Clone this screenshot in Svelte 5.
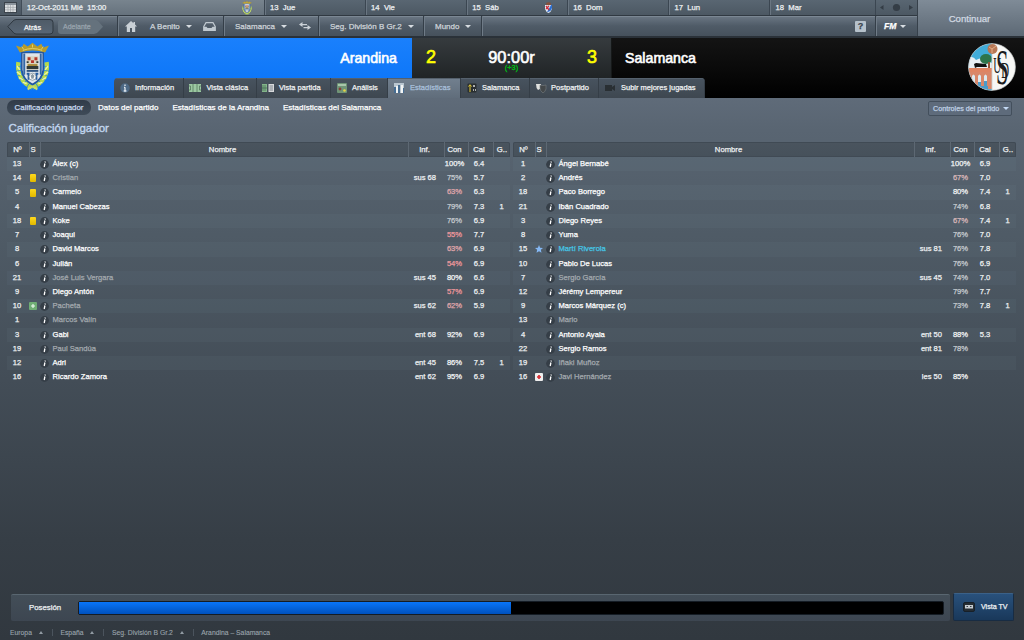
<script>
  // number, status, name, kind, info, condition, rating, goals
  const home = [
    [13, '', 'Álex (c)', '', '', 100, '6.4', ''],
    [14, 'yellow', 'Cristian', 'off', 'sus 68', 75, '5.7', ''],
    [5, 'yellow', 'Carmelo', '', '', 63, '6.3', ''],
    [4, '', 'Manuel Cabezas', '', '', 79, '7.3', 1],
    [18, 'yellow', 'Koke', '', '', 76, '6.9', ''],
    [7, '', 'Joaqui', '', '', 55, '7.7', ''],
    [8, '', 'David Marcos', '', '', 63, '6.9', ''],
    [6, '', 'Julián', '', '', 54, '6.9', ''],
    [21, '', 'José Luis Vergara', 'off', 'sus 45', 80, '6.6', ''],
    [9, '', 'Diego Antón', '', '', 57, '6.9', ''],
    [10, 'plus', 'Pacheta', 'off', 'sus 62', 62, '5.9', ''],
    [1, '', 'Marcos Valín', 'off', '', '', '', ''],
    [3, '', 'Gabi', '', 'ent 68', 92, '6.9', ''],
    [19, '', 'Paul Sandúa', 'off', '', '', '', ''],
    [12, '', 'Adri', '', 'ent 45', 86, '7.5', 1],
    [16, '', 'Ricardo Zamora', '', 'ent 62', 95, '6.9', '']
  ];

  const away = [
    [1, '', 'Ángel Bernabé', '', '', 100, '6.9', ''],
    [2, '', 'Andrés', '', '', 67, '7.0', ''],
    [18, '', 'Paco Borrego', '', '', 80, '7.4', 1],
    [21, '', 'Ibán Cuadrado', '', '', 74, '6.8', ''],
    [3, '', 'Diego Reyes', '', '', 67, '7.4', 1],
    [8, '', 'Yuma', '', '', 76, '7.0', ''],
    [15, 'star', 'Martí Riverola', 'best', 'sus 81', 76, '7.8', ''],
    [10, '', 'Pablo De Lucas', '', '', 76, '6.9', ''],
    [7, '', 'Sergio García', 'off', 'sus 45', 74, '7.0', ''],
    [12, '', 'Jérémy Lempereur', '', '', 79, '7.7', ''],
    [9, '', 'Marcos Márquez (c)', '', '', 73, '7.8', 1],
    [13, '', 'Mario', 'off', '', '', '', ''],
    [4, '', 'Antonio Ayala', '', 'ent 50', 88, '5.3', ''],
    [22, '', 'Sergio Ramos', '', 'ent 81', 78, '', ''],
    [19, '', 'Iñaki Muñoz', 'off', '', '', '', ''],
    [16, 'injury', 'Javi Hernández', 'off', 'les 50', 85, '', '']
  ];

  const days = ['13  Jue', '14  Vie', '15  Sáb', '16  Dom', '17  Lun', '18  Mar'];
  const tabs = [
    { name: 'Información', icon: 'info', w: 70 },
    { name: 'Vista clásica', icon: 'pitch', w: 73 },
    { name: 'Vista partida', icon: 'split', w: 74 },
    { name: 'Análisis', icon: 'analysis', w: 57 },
    { name: 'Estadísticas', icon: 'stats', w: 73 },
    { name: 'Salamanca', icon: 'tactics', w: 69 },
    { name: 'Postpartido', icon: 'masks', w: 69 },
    { name: 'Subir mejores jugadas', icon: 'camera', w: 106 }
  ];
  const pads = [21, 22.5, 22, 21, 22, 21, 21, 22];

  let active = $state('Estadísticas');
  let possession = 50;

  function conClass(c) {
    if (c === 100) return 'full';
    if (c >= 80) return 'high';
    if (c < 60) return 'bad';
    if (c < 65) return 'low';
    if (c < 70) return 'mid';
    return '';
  }
</script>

{#snippet crest(w, h)}
  <svg width={w} height={h} viewBox="0 0 36 50">
    <g fill="none" stroke="#b5d84c" stroke-width="4.4" stroke-dasharray="4 .6">
      <path d="M3.500 20Q1 38 18 46.500" />
      <path d="M32.500 20Q35 38 18 46.500" />
    </g>
    <path d="M2 24l3 4M2 30l4 3M4 36l4 2M8 41l4 1M34 24l-3 4M34 30l-4 3M32 36l-4 2M28 41l-4 1" stroke="#eff59c" stroke-width="1.500" />
    <path d="M13 48l5-3 5 3" stroke="#c9dd68" stroke-width="2" fill="none" />
    <path d="M7 10H29V28Q28 38 18 43Q8 38 7 28Z" fill="#dfe5ea" stroke="#26579b" stroke-width="1.6" />
    <path d="M9.5 11V33M26.5 11V33" stroke="#3268a8" stroke-width="2" />
    <path d="M12 14h12v14H12z" fill="#d9d3bd" />
    <path d="M13 15h3v3h-3zM20 15h3v3h-3zM16.5 18h3v3h-3z" fill="#b5362a" />
    <path d="M12 19h2v2h-2zM22 19h2v2h-2zM12 24h12v3H12z" fill="#313a36" />
    <path d="M13 22h10v2H13z" fill="#a88b3b" />
    <path d="M12 28h12v2H12z" fill="#315784" />
    <path d="M12 32h2v6M24 32h-2v6" stroke="#255da1" stroke-width="2" fill="none" />
    <circle cx="18" cy="35" r="3.6" fill="#fff" stroke="#7b8d9a" stroke-width=".8" />
    <path d="M16 34l2-2 2 2-1 3h-2z" fill="#8c9ba4" />
    <path d="M5 10L1 3l6 2 2-4 4 3 5-4 5 4 4-3 2 4 6-2-4 7Q18 6 5 10Z" fill="#b79b2c" />
    <path d="M8 8Q18 4 28 8M7 4l2 3M18 2v3M29 4l-2 3" stroke="#e4cf62" fill="none" />
  </svg>
{/snippet}

{#snippet table(rows)}
  <section class="table">
    <div class="row thead">
      <b>Nº</b><b>S</b><b>Nombre</b><b>Inf.</b><b>Con</b><b>Cal</b><b>G..</b>
    </div>
    {#each rows as [num, status, name, kind, info, con, cal, goals]}
      <div class="row">
        <span class="num">{num}</span>
        <span class="status">
          {#if status === 'yellow'}
            <i class="card"></i>
          {:else if status === 'plus'}
            <svg width="8" height="8" viewBox="0 0 8 8"><rect width="8" height="8" rx="1" fill="#6fae74" /><path d="M4 2v4M2 4h4" stroke="#eefaf0" stroke-width="1.1" /></svg>
          {:else if status === 'injury'}
            <svg width="8" height="8" viewBox="0 0 8 8"><rect width="8" height="8" rx="1" fill="#eee" /><path d="M4 2v4M2 4h4" stroke="#d62d34" stroke-width="1.7" /></svg>
          {:else if status === 'star'}
            <svg width="8" height="8" viewBox="0 0 10 10"><path d="M5 0l1.4 3.3 3.6.3-2.7 2.4.8 3.7L5 7.7 1.9 9.7l.8-3.7L0 3.6l3.6-.3z" fill="#85b8f4" /></svg>
          {/if}
        </span>
        <span class="name {kind}">
          <svg class="i" width="9" height="9" viewBox="0 0 9 9"><circle cx="4.5" cy="4.5" r="4.4" fill="#353e47" /><path d="M4.9 3.5L4.2 7M5.300 1.500L5.100 2.500" stroke="#fff" stroke-width="1.3" /></svg>
          {name}
        </span>
        <span class="info">{info}</span>
        <span class="con {conClass(con)}">{con ? con + '%' : ''}</span>
        <span class="rating">{cal}</span>
        <span class="goals">{goals}</span>
      </div>
    {/each}
  </section>
{/snippet}

<div class="app">
  <div class="top">
    <div class="bars">
      <div class="dates">
        <div class="cal">
          <svg width="13" height="11" viewBox="0 0 13 11"><rect x=".5" y=".5" width="12" height="10" fill="#dde0e2" stroke="#3c444c" /><path d="M1 1h11v2H1z" fill="#8b949c" /><path d="M1 5.4h11M1 7.8h11M4 3v7M6.5 3v7M9 3v7" stroke="#a4a9ae" stroke-width=".7" /></svg>
        </div>
        <div class="today"><span>12-Oct-2011 Mié&nbsp; 15:00</span>{@render crest(10, 14)}</div>
        {#each days as day, i}
          <div class="day">
            <span>{day}</span>
            {#if i === 2}
              <svg width="9" height="11" viewBox="0 0 9 11"><path d="M1 3h7v4Q7 10 4.5 11 2 10 1 7z" fill="#e8edf7" /><path d="M7 3L3 10Q7 10 8 6V3z" fill="#2e6fd0" /><path d="M2 4l3 4M5 4L2 7" stroke="#d02f3c" stroke-width="1.3" /><ellipse cx="4.5" cy="1.8" rx="2.5" ry="1.5" fill="#87503c" /></svg>
            {/if}
          </div>
        {/each}
        <div class="pager">
          <svg width="36" height="9" viewBox="0 0 36 9" fill="#343d46"><path d="M4.500 2v5L1 4.500z" /><circle cx="17.500" cy="4.500" r="3.600" /><path d="M30 2v5l4-2.500z" /></svg>
        </div>
      </div>
      <div class="menu">
        <div class="nav">
          <svg class="arrows" width="103" height="17" viewBox="0 0 103 17">
            <defs><linearGradient id="btn" x2="0" y2="1"><stop stop-color="#4f5b67" /><stop offset="1" stop-color="#586675" /></linearGradient></defs>
            <path d="M9 1.500H43Q46 1.500 46 4.500V13Q46 16 43 16H9Q7 16 5 13L.8 8.700 5 4Q7 1.500 9 1.500Z" fill="url(#btn)" stroke="#2f3841" />
            <path d="M54 1.500H87Q90 1.500 92 4L96 8.700 92 13Q90 16 87 16H54Q51 16 51 13V4.500Q51 1.500 54 1.500Z" fill="#65727d" />
          </svg>
          <span class="back">Atrás</span>
          <span class="fwd">Adelante</span>
        </div>
        <div class="seg manager">
          <svg width="12" height="11" viewBox="0 0 12 11" fill="#c9d0d6"><path d="M6 0L0 5.500h1.800V11H5V7h2v4h3.200V5.500H12L10 3.600V1H8.500v1.300z" /></svg>
          <span>A Benito</span><i class="down"></i>
          <svg width="13" height="9" viewBox="0 0 13 9"><path d="M3 .6h7l2.300 4v3.800H.7V4.600z" fill="none" stroke="#bfc8cf" stroke-width="1.200" /><path d="M1 4.800h2.500l1 1.300h4l1-1.300h2.500v3.300H1z" fill="#bfc8cf" /></svg>
        </div>
        <div class="seg club"><span>Salamanca</span><i class="down"></i>
          <svg width="12" height="8" viewBox="0 0 12 8"><path d="M3.500 0L0 2.500 3.500 5V3.200H8V1.900H3.500zM8.500 3L12 5.500 8.500 8V6.200H4.500V4.900h4z" fill="#cbd1d7" /></svg>
        </div>
        <div class="seg league"><span>Seg. División B Gr.2</span><i class="down"></i></div>
        <div class="seg world"><span>Mundo</span><i class="down"></i></div>
        <div class="seg help"><span>?</span></div>
        <div class="seg fm"><b>FM</b><i class="down"></i></div>
      </div>
    </div>
    <div class="continue">Continuar</div>
  </div>

  <header>
    <div class="scoreline">
      <div class="home"><span>Arandina</span></div>
      <div class="score">
        <b>2</b>
        <div class="clock"><span>90:00r</span><small>(+3)</small></div>
        <b>3</b>
      </div>
      <div class="away"><span>Salamanca</span></div>
    </div>
    <div class="homecrest">{@render crest(35, 50)}</div>
    <div class="awaycrest">
      <svg width="48" height="48" viewBox="0 0 48 48">
        <defs><clipPath id="disc"><circle cx="24" cy="24" r="23.500" /></clipPath></defs>
        <g clip-path="url(#disc)">
          <path d="M0 0h48v48H0z" fill="#f7f7f5" />
          <path d="M0 0h24v48H0z" fill="#41acd9" />
          <path d="M0 14q5-1 8 3 7-4 10 1 3 0 6 2v6H0z" fill="#e8eff4" />
          <path d="M0 25h24v5H0z" fill="#df8462" />
          <path d="M0 29h24v17H0z" fill="#d98769" />
          <path d="M4 33q1.500-3 3 0v10H4zM10 33q1.500-3 3 0v14h-3zM16 33q1.500-3 3 0v16h-3z" fill="#dce9ef" />
          <path d="M0 39h7v4H0zM10 39h3v6h-3zM16 38h3v9h-3zM8 43h12v5H8z" fill="#4b9bca" />
          <path d="M6 21l2-1 10 1 1 3H9l-2 1z" fill="#111" />
          <ellipse cx="18" cy="16" rx="6" ry="5" fill="#2d744b" />
          <path d="M20 19h2v6h-2z" fill="#93573a" />
          <path d="M24 0v48" stroke="#c6d0d2" stroke-width=".8" />
        </g>
        <circle cx="24.500" cy="6" r="5" fill="#b77754" />
        <path d="M21 4l3 2 4-3M24 6v4" stroke="#e3ac85" fill="none" />
        <text class="mono" transform="scale(.45 1)" x="56 62 74" y="30 41 35" font-size="24">U<tspan font-size="50">S</tspan>D</text>
        <circle cx="24" cy="24" r="23.400" fill="none" stroke="#b9bcbc" stroke-width=".6" />
      </svg>
    </div>
    <nav class="tabs">
      {#each tabs as tab, i}
        <button class:active={active === tab.name} style="width: {tab.w}px; padding-left: {pads[i]}px" onclick={() => (active = tab.name)}>
          <svg width="12" height="10" viewBox="0 0 12 10">
            {#if tab.icon === 'info'}
              <circle cx="6" cy="5" r="4.700" fill="#4d6985" /><path d="M6 4.200V8M5 4.300h1M4.700 8h2.700M6 1.500v1.400" stroke="#e5ecf2" stroke-width="1.300" />
            {:else if tab.icon === 'pitch'}
              <path d="M0 1h12v8H0z" fill="#9cc8a2" /><path d="M4 1v8M8 1v8M0 3h1.500v4H0M12 3h-1.500v4H12" stroke="#55795d" stroke-width=".8" fill="none" />
            {:else if tab.icon === 'split'}
              <path d="M0 1h5v8H0z" fill="#83b48a" /><path d="M1 2v6M3 2v6M0 5h5" stroke="#426650" stroke-width=".7" /><path d="M6.500 1H12v8H6.500z" fill="#d7d9db" /><path d="M7.500 3h3.500M7.500 5h3.500M7.500 7h3.500" stroke="#68727c" stroke-width=".8" />
            {:else if tab.icon === 'analysis'}
              <rect x="1" width="10" height="10" rx="1" fill="#709477" /><path d="M2 1h8v2H2z" fill="#a9c5aa" /><circle cx="4" cy="6" r="1.400" fill="#863e38" /><circle cx="8.500" cy="7.500" r="1.300" fill="#e6d445" />
            {:else if tab.icon === 'stats'}
              <path d="M1 0h10v10H1z" fill="#b9c6d0" /><path d="M1 4h3v6H1zM5 2h2v8H5zM8 5h3v5H8z" fill="#456c91" /><path d="M3 3h2v7H3zM8 2h2v8H8z" fill="#f2f4f4" />
            {:else if tab.icon === 'tactics'}
              <rect x="1.500" y=".5" width="9" height="9" rx="1" fill="#292e30" /><path d="M4 9V2M2.500 3.500L4 1.700l1.500 1.800" stroke="#e5cb37" fill="none" /><path d="M7 3h2M7 7h1M9 7h1" stroke="#dcdcda" stroke-width="1.300" />
            {:else if tab.icon === 'masks'}
              <path d="M1 1h5v3Q5 7 3 7 1 5 1 1z" fill="#e0e1df" /><path d="M5 2q3 1 6 0v4Q10 9 8 10 5 8 5 5z" fill="#44484a" stroke="#777e81" stroke-width=".6" />
            {:else}
              <path d="M1 2h7v6H1zM8 4l3-2v6L8 6z" fill="#292f33" />
            {/if}
          </svg>
          <span>{tab.name}</span>
        </button>
      {/each}
    </nav>
  </header>

  <div class="subnav">
    <span class="pill">Calificación jugador</span>
    <span>Datos del partido</span>
    <span>Estadísticas de la Arandina</span>
    <span>Estadísticas del Salamanca</span>
    <div class="controls">Controles del partido<i class="down"></i></div>
  </div>

  <h1>Calificación jugador</h1>

  <main>
    {@render table(home)}
    {@render table(away)}
  </main>

  <div class="bottom">
    <div class="possession">
      <span>Posesión</span>
      <div class="bar"><div style="width: {possession}%"></div></div>
    </div>
    <div class="tv">
      <svg width="12" height="10" viewBox="0 0 12 10"><rect x=".5" y=".5" width="11" height="9" rx="1.500" fill="#252c32" stroke="#172029" /><path d="M2 3h8v3.500H2z" fill="#c5cbd0" /><path d="M3.500 4h1.500v1H3.500zM7 4h1.500v1H7z" fill="#39424a" /></svg>
      <span>Vista TV</span>
    </div>
  </div>
  <footer>
    <span>Europa</span><i class="up"></i>
    <span class="sep">España</span><i class="up"></i>
    <span class="sep">Seg. División B Gr.2</span><i class="up"></i>
    <span class="sep">Arandina – Salamanca</span>
  </footer>
</div>

<style>
  :global(body) {
    margin: 0;
  }
  * {
    box-sizing: border-box;
  }
  svg {
    flex: none;
    display: block;
  }
  .app {
    width: 1024px;
    height: 640px;
    overflow: hidden;
    display: flex;
    flex-direction: column;
    font: 7.6px 'Liberation Sans', Arial, sans-serif;
    color: #edf0f2;
    white-space: nowrap;
    -webkit-text-stroke: 0.25px currentColor;
    background: linear-gradient(#5f6b79 98px, #596572 130px, #4f5b66 235px, #434d57 380px, #363e46 540px, #31383f 640px);
  }
  .down, .up {
    flex: none;
    width: 0;
    height: 0;
    border: 3px solid transparent;
    border-bottom-width: 0;
    border-top: 3px solid #d8dde2;
  }
  .up {
    border: 2.5px solid transparent;
    border-top-width: 0;
    border-bottom: 3px solid #929ba3;
  }

  .top {
    height: 38px;
    display: flex;
    border-bottom: 2px solid #2a3138;
  }
  .bars {
    width: 917px;
  }
  .dates {
    height: 16px;
    display: flex;
    background: linear-gradient(#596672, #4c5863);
    border-bottom: 1px solid #303942;
  }
  .cal {
    width: 22px;
    padding: 2px 0 0 4px;
    border-right: 1px solid #414c57;
  }
  .today {
    width: 242px;
    padding: 0 12px 0 5px;
    display: flex;
    align-items: center;
    justify-content: space-between;
    background: linear-gradient(#78848e, #66727d);
    font-size: 7.6px;
  }
  .day {
    width: 101.1px;
    padding: 0 14px 0 5px;
    border-left: 1px solid #3b4651;
    box-shadow: inset 1px 0 #6a7682;
    display: flex;
    align-items: center;
    justify-content: space-between;
    white-space: pre;
    font-size: 7.7px;
  }
  .pager {
    flex: 1;
    margin-left: 4px;
    padding: 3px 0 0 3px;
    border-left: 1px solid #3b4651;
  }
  .menu {
    height: 20px;
    display: flex;
    background: linear-gradient(#6b7784, #4f5b67 50%, #46515c);
    box-shadow: inset 0 1px #7b8793;
    color: #ced4d9;
    font-size: 8px;
  }
  .nav {
    width: 117px;
    position: relative;
  }
  .arrows {
    margin: 2px 0 0 7px;
  }
  .back, .fwd {
    position: absolute;
    top: 7px;
    left: 24px;
    font-size: 7.3px;
    color: #f4f5f6;
  }
  .fwd {
    left: 63px;
    font-size: 7px;
    color: #99a4ad;
  }
  .seg {
    display: flex;
    align-items: center;
    border-left: 1px solid #343e48;
    box-shadow: inset 1px 0 #6f7b87;
    padding-left: 11px;
  }
  .seg .down {
    margin: 1px 0 0 6px;
  }
  .manager { width: 106px; padding-left: 7px; }
  .manager span { margin-left: 13px; }
  .manager svg:last-child { margin-left: 11px; }
  .club { width: 95px; }
  .club svg { margin-left: 12px; }
  .league { width: 105px; }
  .world { width: 58px; }
  .help {
    flex: 1;
    justify-content: flex-end;
    padding-right: 9px;
  }
  .help span {
    width: 11px;
    height: 11px;
    background: #b5c1cb;
    border-radius: 1px;
    color: #39444e;
    font: bold 9px/11px 'Liberation Sans', Arial, sans-serif;
    text-align: center;
  }
  .fm { width: 42px; padding-left: 8px; }
  .fm b {
    font-style: italic;
    font-size: 8.6px;
    color: #fff;
  }
  .fm .down { margin-left: 4px; }
  .continue {
    flex: 1;
    border-left: 1px solid #36404a;
    background: linear-gradient(#7f8b97, #5d6975);
    font-size: 9.6px;
    line-height: 37px;
    text-align: center;
    color: #d1d9e2;
    padding-right: 3px;
  }

  header {
    height: 60px;
    position: relative;
    display: flex;
    flex-direction: column;
    border-bottom: 1px solid #414a54;
  }
  .scoreline {
    height: 60px;
    flex: none;
    display: flex;
    font-size: 14.2px;
    line-height: 40px;
    color: #fff;
    -webkit-text-stroke-width: 0.6px;
  }
  .home {
    width: 412px;
    padding-right: 15px;
    text-align: right;
    background: linear-gradient(#1a80fc, #0873f8);
  }
  .score {
    width: 200px;
    height: 40px;
    padding: 0 14px;
    display: flex;
    justify-content: space-between;
    background: linear-gradient(#363b3e, #202426);
    border-right: 1px solid #161919;
  }
  .score b {
    color: #ff0;
    font-size: 18px;
    font-weight: normal;
    line-height: 38px;
  }
  .clock {
    display: flex;
    flex-direction: column;
    align-items: center;
    font-size: 16.4px;
    line-height: 38px;
  }
  .clock small {
    color: #00b714;
    font-size: 7.4px;
    line-height: 8px;
    margin-top: -12px;
    -webkit-text-stroke-width: 0.35px;
  }
  .away {
    flex: 1;
    padding-left: 13px;
    background: linear-gradient(#141414, #000);
  }
  .homecrest, .awaycrest {
    position: absolute;
    left: 15px;
    top: 4px;
  }
  .awaycrest {
    left: 968px;
    top: 5px;
  }
  .mono {
    font-family: 'Liberation Serif', serif;
    fill: #1b1c20;
    stroke: none;
    -webkit-text-stroke: 0;
  }
  .tabs {
    height: 20px;
    display: flex;
    position: absolute;
    left: 114px;
    top: 40px;
    overflow: hidden;
    border-radius: 4px 4px 0 0;
    background: linear-gradient(#48535f, #3e4750);
  }
  .tabs button {
    position: relative;
    flex: none;
    height: 20px;
    border: 0;
    border-right: 1px solid #353e47;
    box-shadow: inset 0 1px #55616d;
    background: none;
    font: inherit;
    -webkit-text-stroke: inherit;
    font-size: 7.5px;
    line-height: 20px;
    color: #eef0f1;
    text-align: left;
    padding: 0;
  }
  .tabs svg {
    position: absolute;
    left: 5px;
    top: 5px;
  }
  .tabs .active {
    background: linear-gradient(#72808f, #606d7b);
    color: #a9c0dc;
  }

  .subnav {
    height: 20px;
    padding: 2px 12px 0 7px;
    display: flex;
    align-items: flex-start;
    font-size: 8px;
    line-height: 15px;
    color: #fff;
  }
  .subnav > span {
    margin-right: 14px;
  }
  .subnav .pill {
    width: 84px;
    margin-right: 7px;
    border-radius: 7px;
    background: linear-gradient(#303b49, #3f4b58);
    text-align: center;
    color: #c7d8ee;
    font-size: 7.9px;
  }
  .controls {
    width: 84px;
    height: 15px;
    margin: 1px 0 0 auto;
    padding-left: 4px;
    display: flex;
    align-items: center;
    background: #5e6b7b;
    border: 1px solid #434f5c;
    border-radius: 2px;
    color: #bfd0e4;
    font-size: 7.2px;
  }
  .controls .down {
    margin-left: 4px;
    border-top-color: #c4daf5;
  }
  h1 {
    height: 22px;
    margin: 0;
    padding-left: 8.5px;
    font-size: 11.5px;
    line-height: 20px;
    font-weight: normal;
    color: #c2d7f0;
    -webkit-text-stroke-width: 0.35px;
  }

  main {
    display: flex;
    gap: 3px;
    padding: 2px 7px 0;
  }
  .table {
    width: 503px;
  }
  .row {
    height: 14.23px;
    display: grid;
    grid-template-columns: 22px 11px 368px 36px 24px 25px 17px;
    line-height: 14.23px;
    text-align: center;
  }
  .row:nth-child(even) {
    background: rgba(130, 150, 165, 0.07);
  }
  .thead {
    height: 15px;
    line-height: 15px;
    font-size: 7.7px;
    background: linear-gradient(#4a545e, #46515b);
    border-radius: 2px 2px 0 0;
    box-shadow: inset 0 0 0 1px #404a54;
  }
  .thead b {
    font-weight: normal;
    padding-right: 4px;
    border-left: 1px solid #5d6873;
  }
  .thead b:first-child {
    border: 0;
    padding-right: 1px;
  }
  .thead b:last-child {
    padding: 0;
  }
  .num {
    padding-right: 2px;
  }
  .status {
    display: flex;
    align-items: center;
    justify-content: center;
    padding-right: 3px;
  }
  .card {
    width: 6px;
    height: 8px;
    background: linear-gradient(#ffd91c, #e2b900);
    border-radius: 1px;
  }
  .name {
    display: flex;
    gap: 3.5px;
    color: #fff;
  }
  .name .i {
    margin-top: 3px;
  }
  .name.off { color: #a3a9ae; }
  .name.best { color: #45c6e5; }
  .info {
    text-align: right;
    padding-right: 8px;
  }
  .con {
    color: #c6cbd0;
    margin: 0 -1px 0 -4px;
  }
  .con.full, .con.high { color: #f3f5f6; }
  .con.mid { color: #dbb9bb; }
  .con.low { color: #e0a8ad; }
  .con.bad { color: #ee989d; }
  .rating {
    padding-right: 3px;
  }

  .bottom {
    margin-top: auto;
    padding: 0 10px 0 11px;
    display: flex;
    justify-content: space-between;
  }
  .possession {
    width: 939px;
    height: 27px;
    margin-top: 1px;
    padding: 0 6px 0 18px;
    display: flex;
    align-items: center;
    background: linear-gradient(#434e58, #3d4651);
    border-top: 1px solid #596670;
    border-radius: 2px;
  }
  .possession span {
    width: 49px;
    font-size: 7.8px;
    line-height: 12px;
    margin-top: -1px;
  }
  .bar {
    flex: 1;
    height: 14px;
    margin-top: -1px;
    background: #000;
    border: 1px solid #151c24;
    border-radius: 2px;
  }
  .bar div {
    height: 100%;
    background: linear-gradient(#0875fa, #0051bd);
  }
  .tv {
    width: 61px;
    height: 28px;
    padding-left: 9px;
    display: flex;
    align-items: center;
    gap: 6px;
    background: linear-gradient(#29517c, #19385a);
    border: 1px solid #182c43;
    border-top-color: #3b6188;
    border-radius: 2px;
    font-size: 7.1px;
  }
  footer {
    height: 19px;
    padding: 3px 10px 0;
    display: flex;
    align-items: center;
    font-size: 6.8px;
    color: #9ca5ad;
    -webkit-text-stroke-width: 0.1px;
  }
  footer .up {
    margin: 0 9px 0 7px;
  }
  .sep {
    border-left: 1px solid #4b545d;
    padding-left: 7.5px;
  }
</style>
